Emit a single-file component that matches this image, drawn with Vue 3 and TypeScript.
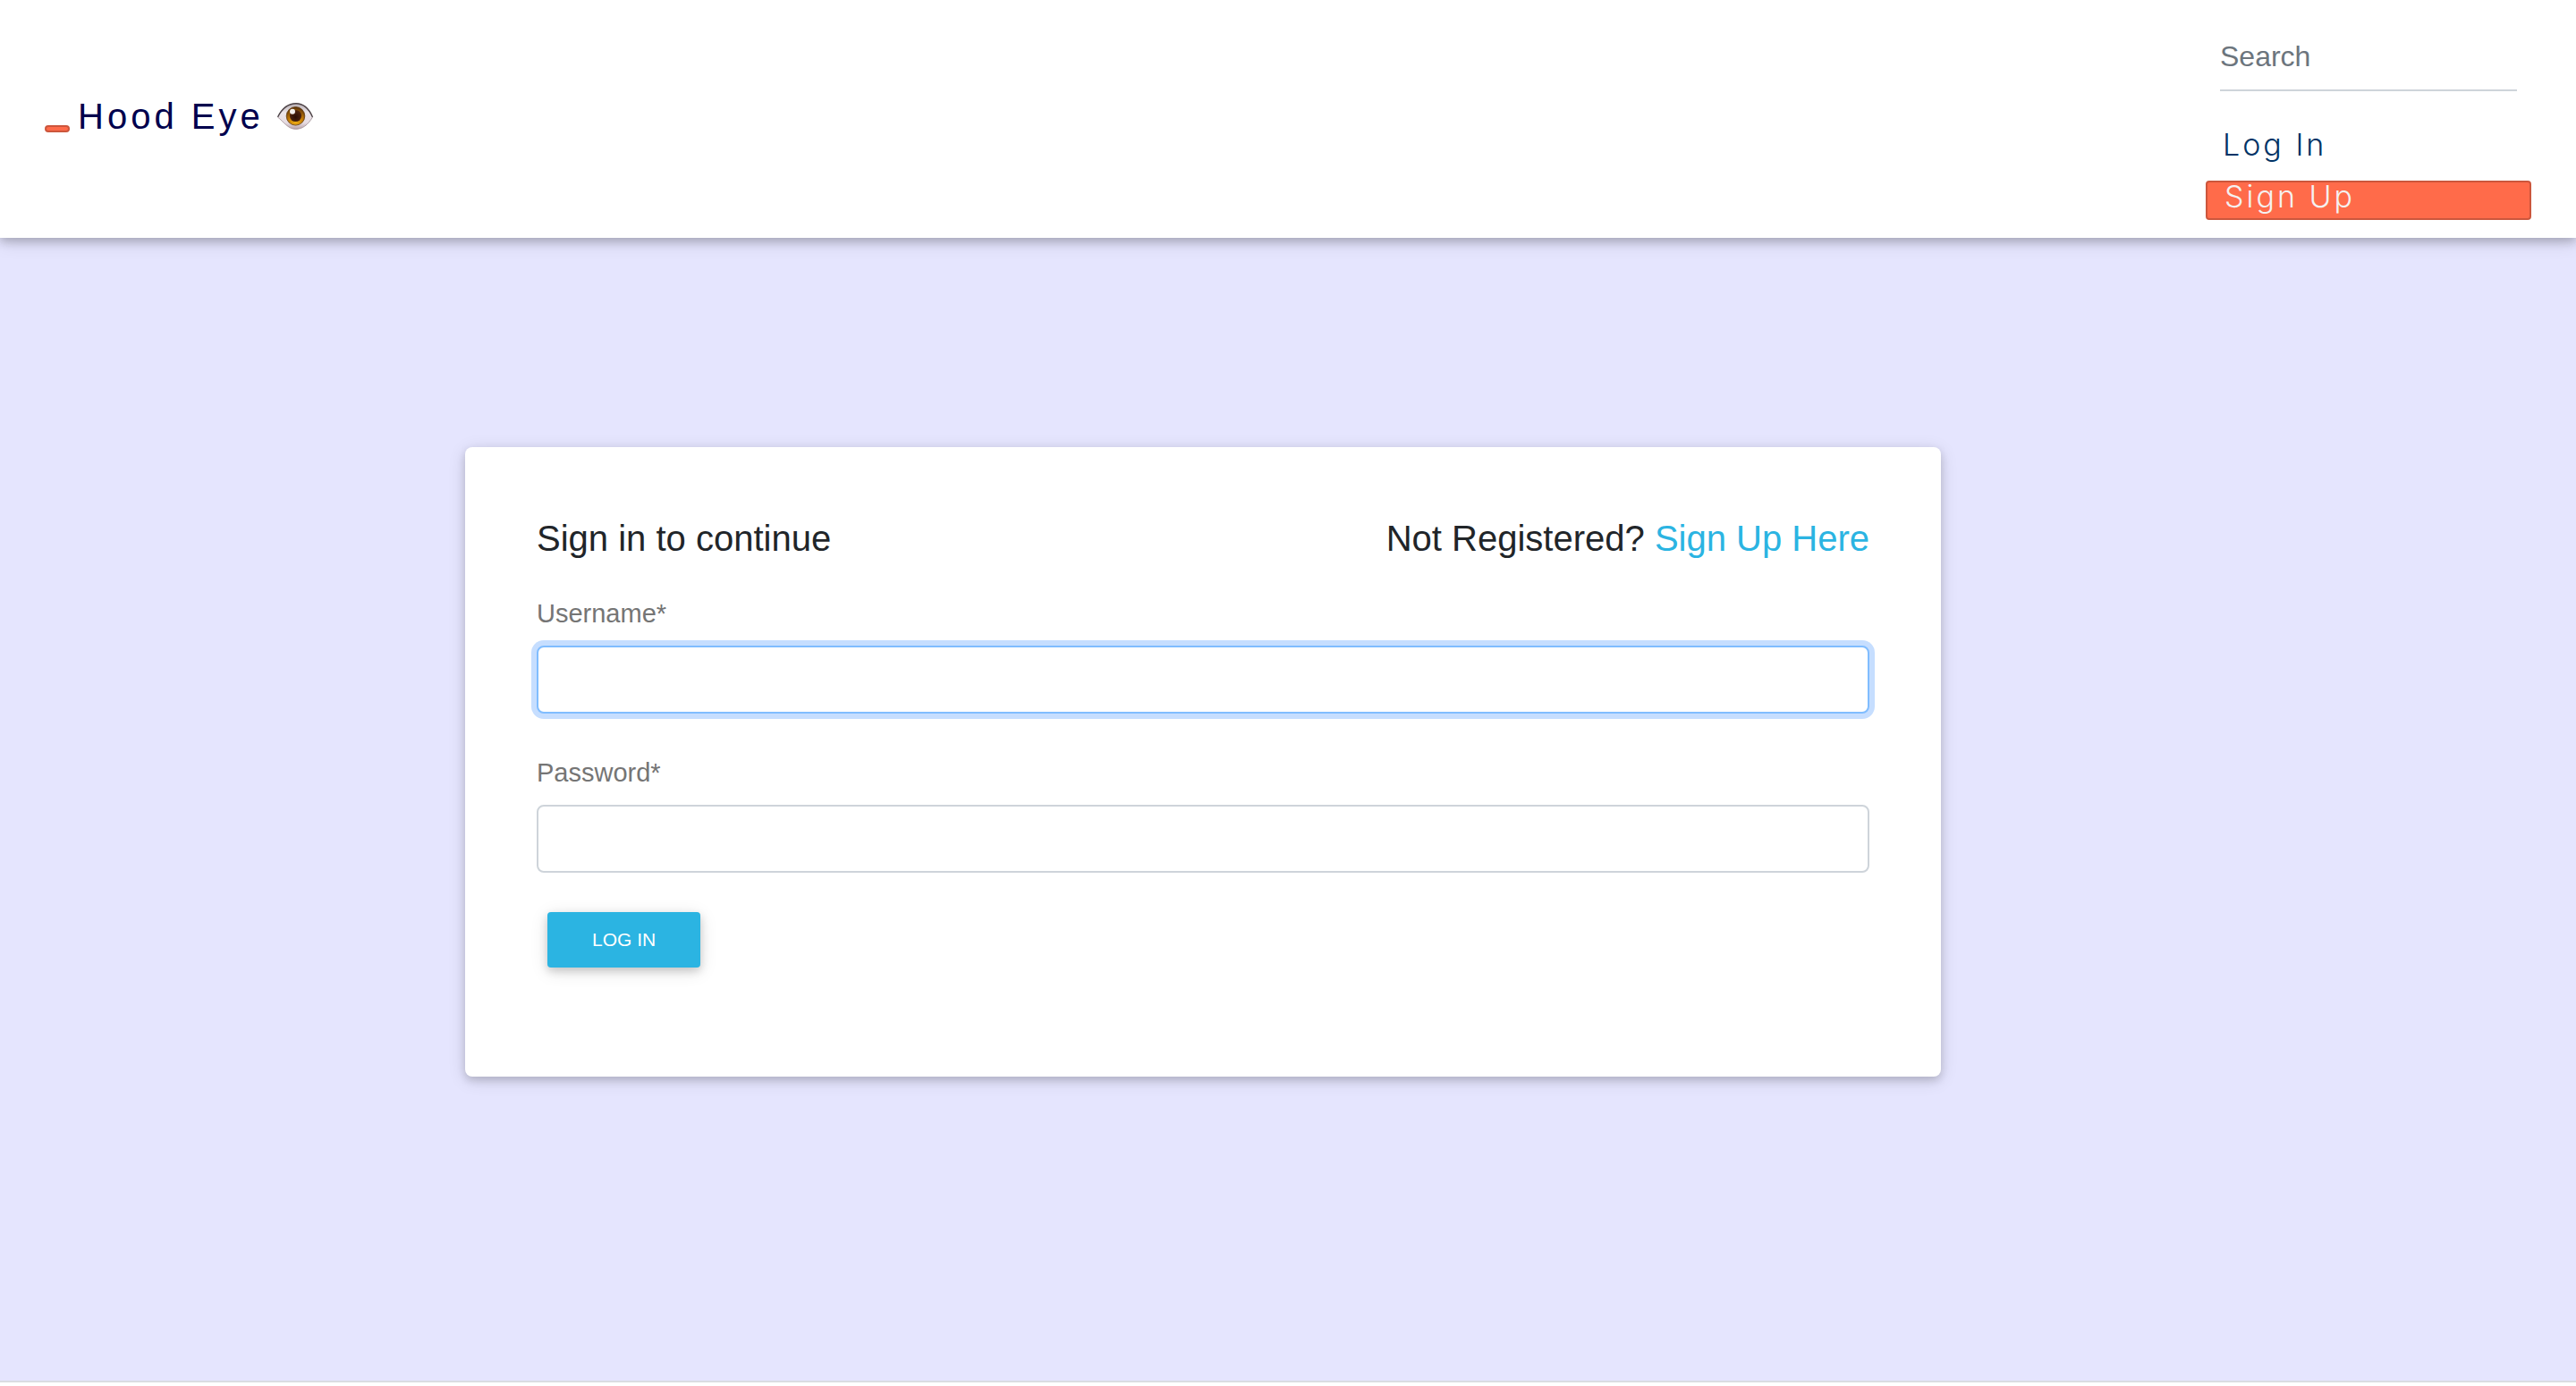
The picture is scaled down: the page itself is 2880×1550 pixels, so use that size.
<script setup lang="ts">
import { ref } from 'vue'

const query = ref('')
const username = ref('')
const password = ref('')
</script>

<template>
  <div class="page">
    <header class="navbar">
      <div class="brand">
        <button class="toggle" type="button" aria-label="Toggle navigation"></button>
        <a class="brand-link" href="#">
          <span>Hood Eye</span>
          <svg class="eye" viewBox="0 0 40 30" aria-hidden="true">
            <defs>
              <linearGradient id="eye-white" x1="0" y1="0" x2="0" y2="1">
                <stop offset="0" stop-color="#b5abb0" />
                <stop offset="0.35" stop-color="#ece6ea" />
                <stop offset="0.75" stop-color="#e6dce2" />
                <stop offset="1" stop-color="#b9a3a9" />
              </linearGradient>
              <radialGradient id="eye-iris" cx="0.5" cy="0.78" r="0.75">
                <stop offset="0" stop-color="#f2b417" />
                <stop offset="0.5" stop-color="#c57c06" />
                <stop offset="1" stop-color="#5b3208" />
              </radialGradient>
              <radialGradient id="eye-pupil" cx="0.5" cy="0.6" r="0.6">
                <stop offset="0" stop-color="#2a0d06" />
                <stop offset="1" stop-color="#54280f" />
              </radialGradient>
            </defs>
            <path d="M0.5 16C5 7 12 0.8 21 0.8C30 0.8 36 8 39.5 16C34 25 28 29.4 20.5 29.4C12 29.4 7 21 0.5 16Z" fill="url(#eye-white)" />
            <path d="M0.5 16C5 7 12 0.8 21 0.8C30 0.8 36 8 39.5 16" fill="none" stroke="#4a4044" stroke-width="1.4" />
            <path d="M0.5 16C7 21 12 29.4 20.5 29.4C28 29.4 34 25 39.5 16" fill="none" stroke="#a08d93" stroke-width="0.8" />
            <circle cx="20.5" cy="14.8" r="10.3" fill="url(#eye-iris)" stroke="#5f3b12" stroke-width="0.8" />
            <circle cx="20.5" cy="14.5" r="6.6" fill="url(#eye-pupil)" />
            <circle cx="17" cy="9.8" r="3" fill="#fff" opacity="0.92" />
          </svg>
        </a>
      </div>
      <nav class="menu">
        <input v-model="query" class="search" type="search" placeholder="Search" aria-label="Search" />
        <a class="menu-link" href="#">Log In</a>
        <a class="signup" href="#">Sign Up</a>
      </nav>
    </header>

    <main class="content">
      <form class="card" @submit.prevent>
        <div class="card-head">
          <h1 class="title">Sign in to continue</h1>
          <p class="title">Not Registered? <a class="accent" href="#">Sign Up Here</a></p>
        </div>
        <label class="label" for="username">Username*</label>
        <input id="username" v-model="username" class="field active" type="text" />
        <label class="label" for="password">Password*</label>
        <input id="password" v-model="password" class="field" type="password" />
        <button class="submit" type="submit">LOG IN</button>
      </form>
    </main>

    <footer class="footer"></footer>
  </div>
</template>

<style>
body {
  margin: 0;
  background: #fff;
}
</style>

<style scoped>
*,
*::before,
*::after {
  box-sizing: border-box;
}

.page {
  display: flex;
  flex-direction: column;
  min-height: 100vh;
  font-family: "Liberation Sans", Arial, sans-serif;
  color: #212529;
}

a {
  text-decoration: none;
}

.navbar {
  position: relative;
  display: flex;
  align-items: center;
  justify-content: space-between;
  padding: 24px 50px 20px;
  background: #fff;
  box-shadow: 0 4px 10px rgba(0, 0, 0, 0.2), 0 4px 20px rgba(0, 0, 0, 0.14);
}

.brand {
  display: flex;
  align-items: flex-end;
  gap: 9px;
  padding-bottom: 10px;
}

.toggle {
  width: 28px;
  height: 8px;
  margin-bottom: 6px;
  padding: 0;
  border: 2px solid #cc563c;
  border-radius: 4px;
  background: #ff6b4a;
}

.brand-link {
  display: flex;
  align-items: center;
  gap: 15px;
  font-size: 40px;
  line-height: 48px;
  letter-spacing: 4px;
  color: #00004d;
}

.eye {
  width: 40px;
  height: 30px;
}

.menu {
  display: flex;
  flex-direction: column;
  width: 364px;
}

.search {
  height: 78px;
  margin: 0 16px;
  padding: 2px 0 0;
  border: 0;
  border-bottom: 2px solid #ced4da;
  outline: 0;
  background: transparent;
  font: 32px/48px "Liberation Sans", Arial, sans-serif;
  appearance: none;
}

.search::placeholder {
  color: #6c757d;
  opacity: 1;
}

.menu-link,
.signup {
  font-family: Inter, "Liberation Sans", sans-serif;
  font-size: 34px;
  font-weight: 300;
  letter-spacing: 3px;
}

.menu-link {
  margin-top: 36px;
  padding-left: 19px;
  line-height: 48px;
  color: #003366;
}

.signup {
  height: 44px;
  margin-top: 16px;
  padding: 0 19px;
  border: 2px solid #cc563c;
  border-radius: 4px;
  background: #ff6b4a;
  line-height: 32px;
  color: #f5f1f1;
}

.content {
  display: grid;
  flex: 1;
  grid-template-columns: 520fr 1650fr 710fr;
  align-items: start;
  padding: 234px 0;
  background: #e5e5fe;
}

.card {
  display: flex;
  flex-direction: column;
  grid-column: 2;
  padding: 78px 80px 122px;
  border-radius: 8px;
  background: #fff;
  box-shadow: 0 4px 10px rgba(0, 0, 0, 0.16), 0 4px 20px rgba(0, 0, 0, 0.12);
}

.card-head {
  display: flex;
  justify-content: space-between;
  margin-bottom: 38px;
}

.title {
  margin: 0;
  font-size: 40px;
  font-weight: 400;
  line-height: 48px;
}

.accent {
  color: #2bb4e2;
}

.label {
  margin-bottom: 14px;
  font-size: 29px;
  line-height: 44px;
  color: #757575;
}

.field {
  height: 76px;
  margin-bottom: 44px;
  padding: 12px 24px;
  border: 2px solid #ced4da;
  border-radius: 8px;
  outline: 0;
  background: #fff;
  font: 32px/48px "Liberation Sans", Arial, sans-serif;
  color: #495057;
}

.field.active {
  border-color: #80bdff;
  box-shadow: 0 0 0 6px #c6deff;
}

.submit {
  align-self: flex-start;
  height: 62px;
  margin-left: 12px;
  padding: 0 50px;
  border: 0;
  border-radius: 4px;
  background: #2bb4e2;
  box-shadow: 0 4px 10px rgba(0, 0, 0, 0.16), 0 4px 20px rgba(0, 0, 0, 0.12);
  font: 21px/32px "Liberation Sans", Arial, sans-serif;
  color: #fff;
}

.footer {
  height: 6px;
  border-top: 2px solid #dadce2;
  background: #fff;
}
</style>
